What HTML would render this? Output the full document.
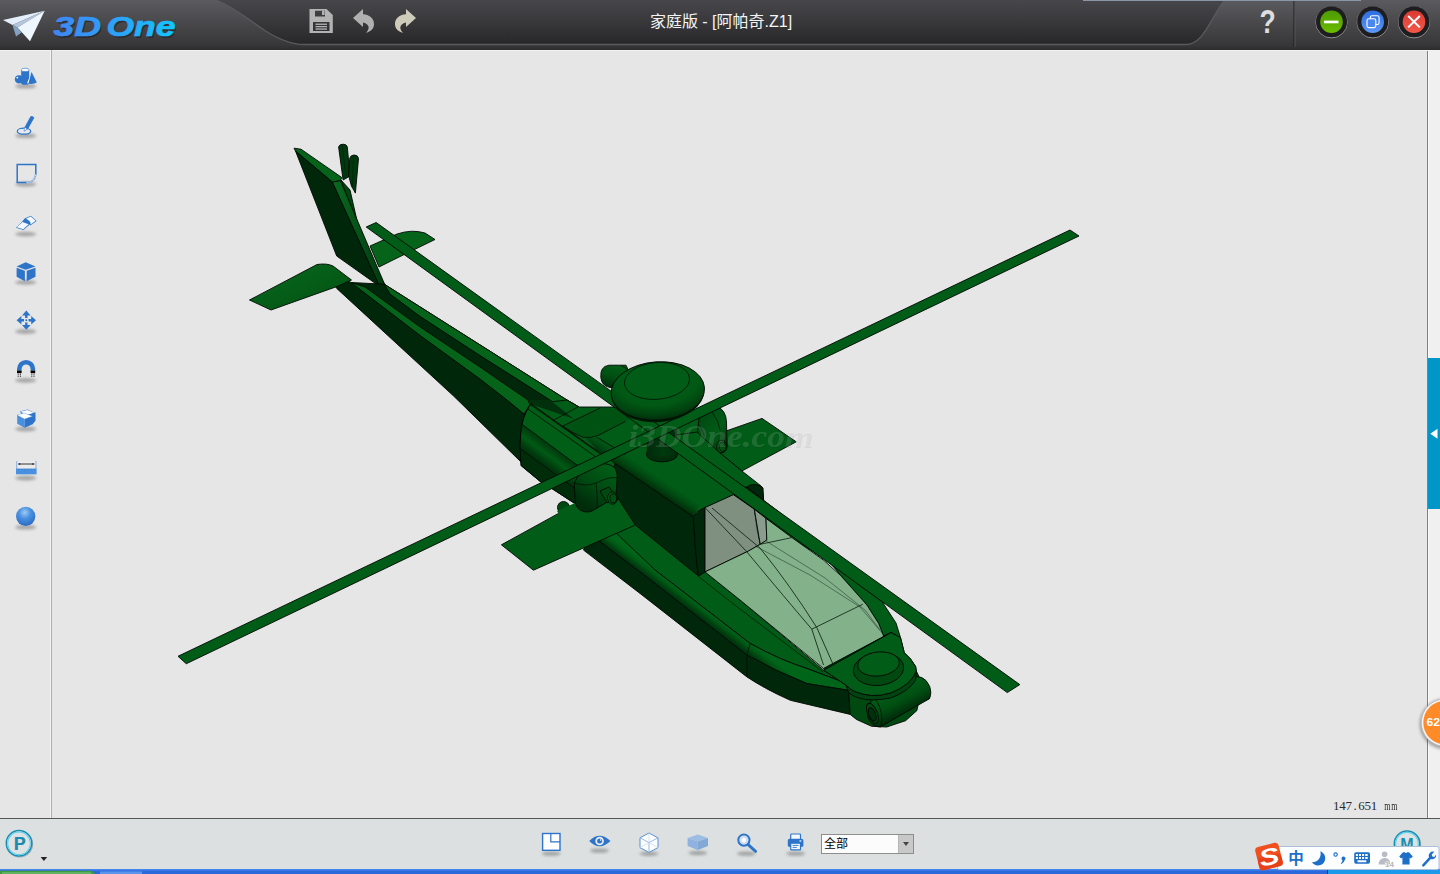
<!DOCTYPE html>
<html lang="zh-CN">
<head>
<meta charset="utf-8">
<title>家庭版 - [阿帕奇.Z1]</title>
<style>
*{box-sizing:border-box;margin:0;padding:0}
html,body{width:1440px;height:874px;overflow:hidden;background:#e6e6e6;font-family:"Liberation Sans","Noto Sans CJK SC",sans-serif}
#app{position:relative;width:1440px;height:874px;overflow:hidden;background:#e6e6e6}
#titlebar{position:absolute;left:0;top:0;width:1440px;height:50px;background:linear-gradient(#4d4d51 0,#434346 40%,#343437 100%)}
#titlebar svg{position:absolute;left:0;top:0}
#title{position:absolute;left:1px;top:12px;width:1440px;text-align:center;color:#f4f4f4;font-size:16px;line-height:20px;letter-spacing:0}
#canvas{position:absolute;left:0;top:50px;width:1440px;height:768px;background:#e6e6e6}
#sideline{position:absolute;left:50px;top:50px;width:2px;height:768px;background:linear-gradient(90deg,#f4f4f4 0 50%,#9db3c4 50% 100%)}
#topstrip{position:absolute;left:0;top:50px;width:1440px;height:1px;background:#f2f2f2}
#rightline{position:absolute;left:1427px;top:51px;width:1px;height:767px;background:#808080}
#rightpane{position:absolute;left:1428px;top:51px;width:12px;height:767px;background:#f0f0f0;border-left:1px solid #fafafa}
#bluetab{position:absolute;left:1428px;top:358px;width:12px;height:151px;background:#0096c8}
#bottombar{position:absolute;left:0;top:818px;width:1440px;height:52px;background:#dce0e0;border-top:1px solid #565656}
#taskbar{position:absolute;left:0;top:869px;width:1440px;height:5px;background:#2b6fe3}
#overlay{position:absolute;left:0;top:0;width:1440px;height:874px}
#combo{position:absolute;left:821px;top:834px;width:93px;height:20px;background:#fcfcfc;border:1px solid #8e8e8e;font-size:12px;line-height:18px;padding-left:2px;color:#000}
#combo i{position:absolute;right:0;top:0;width:15px;height:18px;background:#c8c8c8;border-left:1px solid #b5b5b5}
#combo i:after{content:"";position:absolute;left:4px;top:7px;border:3px solid transparent;border-top:4px solid #444;border-bottom:0}
#dim{position:absolute;left:1333px;top:798px;height:16px;white-space:nowrap;font-family:"Liberation Serif","Noto Serif CJK SC",serif;font-size:13px;line-height:16px;color:#2a2a2a}
#dim span{display:inline-block;width:6.3px;text-align:center}
#dim span.m{transform:scaleX(0.62);transform-origin:50% 50%}
</style>
</head>
<body>
<div id="app">
  <div id="canvas"></div>
  <div id="topstrip"></div>
  <div id="sideline"></div>
  <div id="rightpane"></div>
  <div id="rightline"></div>
  <div id="bluetab"></div>
  <svg id="heli" width="1440" height="874" viewBox="0 0 1440 874" style="position:absolute;left:0;top:0" shape-rendering="geometricPrecision">
<defs>
<linearGradient id="gFinR" x1="0" y1="0" x2="1" y2="0"><stop offset="0" stop-color="#0a6a20"/><stop offset="1" stop-color="#003a0e"/></linearGradient>
<linearGradient id="gStab" x1="0" y1="0" x2="1" y2="1"><stop offset="0" stop-color="#0a6a20"/><stop offset="1" stop-color="#00500f"/></linearGradient>
<radialGradient id="gCap" cx="0.5" cy="0.3" r="0.72"><stop offset="0" stop-color="#006018"/><stop offset="0.62" stop-color="#005814"/><stop offset="0.85" stop-color="#00400f"/><stop offset="1" stop-color="#002608"/></radialGradient>
<linearGradient id="gBox" gradientUnits="userSpaceOnUse" x1="575" y1="425" x2="535" y2="480"><stop offset="0" stop-color="#005c16"/><stop offset="0.35" stop-color="#005213"/><stop offset="0.8" stop-color="#003a0e"/><stop offset="1" stop-color="#002c0a"/></linearGradient>
<linearGradient id="gBody" gradientUnits="userSpaceOnUse" x1="700" y1="604.700" x2="692.500" y2="614.500"><stop offset="0" stop-color="#006419"/><stop offset="0.3" stop-color="#005814"/><stop offset="0.7" stop-color="#003a0e"/><stop offset="1" stop-color="#002a0a"/></linearGradient>
<linearGradient id="gNac" gradientUnits="userSpaceOnUse" x1="610" y1="470" x2="585" y2="505"><stop offset="0" stop-color="#005c16"/><stop offset="0.5" stop-color="#004a12"/><stop offset="1" stop-color="#002c0a"/></linearGradient>
<linearGradient id="gNacR" gradientUnits="userSpaceOnUse" x1="700" y1="420" x2="728" y2="440"><stop offset="0" stop-color="#004a12"/><stop offset="0.6" stop-color="#005c16"/><stop offset="1" stop-color="#003a0e"/></linearGradient>
<linearGradient id="gBarrel" gradientUnits="userSpaceOnUse" x1="896" y1="688" x2="908" y2="712"><stop offset="0" stop-color="#005c16"/><stop offset="0.5" stop-color="#005012"/><stop offset="1" stop-color="#002a0a"/></linearGradient>
<linearGradient id="gNoseF" gradientUnits="userSpaceOnUse" x1="880" y1="680" x2="875" y2="725"><stop offset="0" stop-color="#004a12"/><stop offset="1" stop-color="#00300c"/></linearGradient>
<linearGradient id="gRidge" gradientUnits="userSpaceOnUse" x1="640" y1="464.500" x2="633" y2="475"><stop offset="0" stop-color="#005c16"/><stop offset="0.5" stop-color="#004a12"/><stop offset="1" stop-color="#003009"/></linearGradient>
<linearGradient id="gBump" gradientUnits="userSpaceOnUse" x1="614" y1="366" x2="608" y2="388"><stop offset="0" stop-color="#005c16"/><stop offset="0.45" stop-color="#005012"/><stop offset="1" stop-color="#002a0a"/></linearGradient>
<linearGradient id="gBoxB" gradientUnits="userSpaceOnUse" x1="550" y1="445" x2="537.800" y2="461.500"><stop offset="0" stop-color="#003a0e"/><stop offset="0.12" stop-color="#00400f"/><stop offset="0.45" stop-color="#005a15"/><stop offset="0.8" stop-color="#003c0e"/><stop offset="1" stop-color="#002f0b"/></linearGradient>
<linearGradient id="gValley" gradientUnits="userSpaceOnUse" x1="566" y1="429" x2="572" y2="419"><stop offset="0" stop-color="#006a1a"/><stop offset="0.45" stop-color="#005414"/><stop offset="1" stop-color="#002c0a"/></linearGradient>
<linearGradient id="gMast" gradientUnits="userSpaceOnUse" x1="647" y1="0" x2="678" y2="0"><stop offset="0" stop-color="#00280a"/><stop offset="0.5" stop-color="#003a0e"/><stop offset="1" stop-color="#002e0b"/></linearGradient>
</defs>
<g stroke="#000802" stroke-width="0.9" stroke-linejoin="round">
<!-- right H-stab -->
<path d="M370,246 L397,234 Q412,229 425,233 L435,239.5 L395,259 L379,267 Z" fill="#056419"/>
<!-- tail prongs -->
<path d="M338.600,147 Q339.500,144 343,144.200 Q346.800,144.200 347.300,147 L350,176 L343.100,180 Z" fill="#003a0e"/>
<path d="M349.800,158 Q350.800,155 354.200,155 Q358,155 358.500,158.500 L355.400,193.100 L351.400,186 L348.500,175 Z" fill="#003a0e"/>
<path d="M342.200,145 L346,177 M353.500,156 L352.500,187" fill="none" stroke-width="0.600" stroke-opacity="0.600"/>
<!-- fin back strip -->
<path d="M341,180 L350,190 L358,225 L372,262 L385,285 L380,286 Z" fill="#004611"/>
<!-- fin top -->
<path d="M294,148.200 L301,149.200 L341.800,177.500 L340.400,180.700 L332.500,182.100 L295.500,151 Z" fill="#056419"/>
<!-- fin big dark -->
<path d="M295.500,151 L332.500,182.100 L379.700,286.500 L336.700,256 Z" fill="#00270a"/>
<!-- fin right -->
<path d="M332.500,182.100 L340.400,180.700 L385.200,285.600 L379.700,286.500 Z" fill="url(#gFinR)"/>
<!-- boom -->
<path d="M336.700,288.400 L334,284 L345,279 L351,282.500 L384.300,284.200 L567,400 L579,407 L529,404 L521,440 L521,462 L453.600,396 Z" fill="#00270a"/>
<path d="M384.300,284.200 L567,400 L579,407 L560,408 L550,400 L480,355.500 L420.200,316.500 L390,294 Z" fill="#056419"/>
<path d="M365,287 L420.200,327 L480,367 L528,400 L530,405 L524,414 L507,400 L480,379 L420.200,335.500 L351,282.500 Z" fill="#056419"/>
<!-- left H-stab -->
<path d="M249.500,300 L317,264.500 Q327,263 333,266 L351.500,280 L337,286.500 L271,310 Z" fill="url(#gStab)"/>
<!-- right wing -->
<path d="M720,453 L726,431 L762,418.400 L796.200,441.800 L741.900,471 Z" fill="#005c16"/>
<!-- right nacelle -->
<path d="M695,430 L699,413 Q706,403 717,406.500 Q726,410 726.500,422 L727,446 Q723,454 716,451 L695,438 Z" fill="url(#gNacR)"/>
<path d="M695.600,421.100 Q702,427 704.400,436 M712.200,412.200 Q719,421 720,430" fill="none" stroke-width="0.700"/>
<ellipse cx="721.800" cy="446.500" rx="5.200" ry="6.300" fill="#005c16"/>
<ellipse cx="722.600" cy="446.800" rx="3.600" ry="4.600" fill="#005012"/>
<!-- top junction region -->
<path d="M530.900,404.200 L567,400 L579,407 L614,407 L700,410 L697,436 L640,470 L615,463.500 Z" fill="#005c16"/>
<path d="M528,400 L550,400 L573.500,418.800 L530.900,404.300 Z" fill="#00300c" stroke="none"/>

<!-- deck -->
<path d="M615,463.500 L640,440 L697,432 L720,453 L741.900,471 L756.900,482.700 L762,486.900 L763.600,500.200 L746,487 L733.400,494.700 L705,507.600 L696.700,511.800 L693.700,517 Z" fill="#005c16"/>
<path d="M746.900,486.900 Q752,483 760,485.500 L763,488 L763.600,500.200 Z" fill="#00270a"/>
<!-- big box -->
<path d="M531.100,403.900 L593.500,448.500 L617,465 L622,500 L575,503.600 L551.800,488.500 L541.100,482.200 L521.100,465.600 L520,445.600 Q520.500,432 522.200,423.300 Q525,411 531.100,403.900 Z" fill="#005e17"/>
<path d="M522.200,424.400 L577.800,465.600 L600,482 L585,496 L555.600,474.400 L520.600,448.900 Q520.700,434 522.200,424.400 Z" fill="url(#gBoxB)" stroke="none"/>
<path d="M520.600,448.900 L555.600,474.400 L585,496 L575,503.600 L551.800,488.500 L541.100,482.200 L521.100,465.600 L520,445.600 Z" fill="#002c0a" stroke="none"/>
<path d="M527.800,408.900 L595.600,456.700 M522.200,424.400 L577.800,465.600 L600,482 M520.600,448.900 L555.600,474.400 L585,496" fill="none" stroke-width="0.800"/>
<path d="M531.100,403.900 Q525,411 522.200,423.300 Q520.500,432 520,445.600 L521.100,465.600 L541.100,482.200 L551.800,488.500 L575,503.600" fill="none" stroke-width="0.900"/>
<!-- ridge -->
<path d="M585.600,437.900 L596.800,437.200 L614.200,447.600 L624.400,454.400 L700,503 L693.700,517 L615,463.500 L600.200,453.900 Z" fill="url(#gRidge)" stroke="none"/>
<!-- saddle -->
<path d="M562.600,426 Q573,433.500 582.800,437.200 Q590,438.500 598,435.500 L625.300,421.500 L640,410 L600.300,407.900 Z" fill="#005213" stroke="none"/>
<path d="M554.300,419.800 L577.700,407.100 M562.600,426 L600.300,407.900 M562.600,426 Q573,433.500 582.800,437.200 Q590,438.500 598,435.500 L625.300,421.500 M596.800,437.200 L614.200,447.600 M529.100,403.700 L600.200,453.900" fill="none" stroke-width="0.800"/>
<!-- dark side -->
<path d="M615,463.500 L693.700,517 L695,545 L698.400,576 L635.300,525 L618.600,506 L612,480 Z" fill="#00270a"/>
<!-- lower body -->
<path d="M603,528 L618.600,506 L635.300,525 L698.400,576 L705,571.900 L740,600 L823.700,670.200 L847,683.600 L807,668.500 Q780,660 750.200,643.500 L655,570 L612,536.800 Z" fill="#005c16"/>
<path d="M614,531 L655,570 L750.200,643.500 Q780,660 807,668.500 L847,683.600 L848.600,690.300 L807,683.600 Q775,671 746.900,655.200 L640,572 L600,541.800 L602,536 Z" fill="url(#gBody)"/>
<path d="M602,536 L600,541.800 L640,572 L746.900,655.200 Q775,671 807,683.600 L848.600,690.300 L850.200,714.400 L790.300,700.300 Q765,689 746.900,676.900 L640,593.400 L583.500,550.100 L586,543 Z" fill="#00270a"/>
<path d="M750.200,643.500 L746.900,655.200 L746.900,676.900" fill="none" stroke-width="0.7"/>
<path d="M698.400,576.500 L740,609 L823,672" fill="none" stroke-width="0.6"/>
<!-- left wing -->
<path d="M501.400,544.800 L558.500,513.400 L573.500,505 L603.600,503 L618.600,499 L635.300,525 L533.400,570.200 Z" fill="#005c16"/>
<circle cx="563.500" cy="507.500" r="6" fill="#004a12"/>
<path d="M557,511 L575,503 L575,515 L560,516 Z" fill="#005c16" stroke="none"/>
<!-- left nacelle -->
<path d="M574.300,483 Q578,472 592,466 Q606,461 614,467 Q618,472 617,480 L616,497 L597,508 Q588,515 580,510 Q575,507 575,498 Z" fill="url(#gNac)"/>
<path d="M574.300,483 Q586,487 596,483 Q610,476 617,478 M596,483 Q598,497 597,508" fill="none" stroke-width="0.7"/>
<path d="M600,491 L609,487 L616,497 L607,503 Z" fill="#004a12"/>
<ellipse cx="612.500" cy="498" rx="5" ry="6.200" fill="#005c16"/>
<ellipse cx="613.300" cy="498.300" rx="3.400" ry="4.500" fill="#005012"/>
<!-- right rim (cockpit) -->
<path d="M733.400,494.700 L746,487 L763.600,500.200 L797,526 L863.600,588 L882,601.500 L896,623 L900.500,637.600 L891.100,632.600 L883.600,636 L878.600,623.400 L866.900,605 L853.600,590 L827.500,560 L790,537.500 L766,518.400 L754.300,509.200 Z" fill="#005c16"/>
<!-- cockpit frame -->
<path d="M693.400,520.100 Q694,512 705,507.600 L705,571.900 L698.400,576 L696.700,563.500 Z" fill="#00270a"/>
<!-- rear glass -->
<path d="M705,507.600 L733.400,494.700 L754.300,509.200 L760.200,544.300 L748.500,551 L705,571.900 Z" fill="#7f9080"/>
<path d="M754.300,509.200 L766,518.400 L766.800,540.100 L760.200,544.300 Z" fill="#8a9c8b"/>
<!-- green glass -->
<path d="M705,571.900 L748.500,551 L760.200,544.300 L766.800,540.100 L766,518.400 L791.900,537.600 L823.600,560.200 L840.300,575.200 L853.600,590 L866.900,605 L878.600,623.400 L883.600,636 L891.100,632.600 L823.500,668.500 L740,600 Z" fill="#82b18a"/>
<g fill="none" stroke="#0a1a0d" stroke-width="0.8">
<path d="M705,507.600 L747,552 Q770,580 811.800,629.200 L823.500,665"/>
<path d="M712,508 L760,548 Q790,585 816.800,627.600 L832.700,663.500"/>
<path d="M760.200,544.300 L791.900,537.600"/>
<path d="M811.800,629.200 L862.800,604.200"/>
<path d="M755,546 L810,575 L860,607 L883,634" stroke-opacity="0.55"/>
<path d="M766,541 L825,578 L865,610 L880,630" stroke-opacity="0.55"/>
<path d="M754.300,509.200 L757,530 L760.200,544.300" stroke-opacity="0.55"/>
</g>
<path d="M823.500,668.500 L891.100,632.600 L893,635.500 L826,671 Z" fill="#003a0e" stroke-width="0.5"/>
<!-- nose -->
<path d="M848.900,693 L846.400,685.400 L823.700,670.200 L891.100,632.600 L900.500,637.600 L904.300,652.700 L910.600,659 L915.600,666.500 L916.300,671 L929.500,698.600 L918.200,704.300 L916.900,710.600 L905.600,720.700 L886.700,727 L871.600,726.300 L856.400,719.400 L850.200,714.400 Z" fill="#004a12"/>
<!-- gun barrel -->
<path d="M871.600,700.500 L916.900,676.600 Q922,676.500 926,680.500 Q931,686.500 930.800,692 Q930.800,696 929.500,698.600 L880.400,727 Q872,727 868,718 Q866,708 871.600,700.500 Z" fill="url(#gBarrel)"/>
<path d="M876,700 Q884,712 881,726" fill="none" stroke-width="0.700"/>
<ellipse cx="872.400" cy="713.300" rx="4.800" ry="10.600" fill="#004a12" transform="rotate(-22 872.400 713.300)"/>
<ellipse cx="872.200" cy="714.400" rx="3.300" ry="7" fill="#00300c" transform="rotate(-22 872.200 714.400)"/>
<!-- lip band -->
<path d="M846.400,685.400 Q849.500,689 855.200,691.700 Q862,694.500 871.600,695.500 Q881,695.800 890.500,693 Q900,689.500 908.100,682.900 Q914,677 916.300,671 L915.600,680.400 Q912,685.500 905.600,690.500 Q899,695 890.500,698 Q882,699.800 872.800,699.900 Q866,700 859,698 Q853,696 848.900,693 Z" fill="#004511"/>
<!-- platform -->
<path d="M823.700,670.200 L891.100,632.600 L900.500,637.600 L904.300,652.700 L910.600,659 L915.600,666.500 L916.300,671 Q914,677 908.100,682.900 Q900,689.500 890.500,693 Q881,695.800 871.600,695.500 Q862,694.500 855.200,691.700 Q849.500,689 846.400,685.400 Z" fill="#005c16"/>
<ellipse cx="878.500" cy="669" rx="25.200" ry="16.400" fill="#004a12" transform="rotate(-6 878.500 669)"/>
<ellipse cx="878.500" cy="664" rx="20.800" ry="12" fill="#005c16" transform="rotate(-6 878.500 664)"/>
<!-- mast -->
<ellipse cx="662" cy="454.300" rx="15.600" ry="7.500" fill="#002e0b"/>
<path d="M647,426 L677,426 L677.600,453 Q662,460 646.700,453 Z" fill="url(#gMast)" stroke="none"/>
<!-- blades -->
<path d="M366.200,227 L376.200,222.500 L1019.800,684.600 L1007.300,692.600 Z" fill="#005c16"/>
<path d="M178,656.250 L186.250,663.750 L1079,236 L1070,230 Z" fill="#005c16"/>
<!-- bump -->
<path d="M600.800,377 Q600,366.500 609,365.200 L626,365.200 L632,378 L624,388 L610,387.500 Q601.500,386 600.800,377 Z" fill="url(#gBump)"/>
<path d="M621,365.500 L627,369" fill="none" stroke-width="0.700"/>
<ellipse cx="657.800" cy="393.200" rx="46.500" ry="29" fill="#001c06" stroke="none" transform="rotate(-4 657.800 393.200)"/>
<!-- cap -->
<ellipse cx="657.800" cy="391" rx="46.800" ry="29.200" fill="url(#gCap)" transform="rotate(-4 657.800 391)"/>
<ellipse cx="657" cy="380.900" rx="32.600" ry="18.400" fill="#005c16" transform="rotate(-5 657 380.900)" stroke-width="0.7"/>
</g>
</svg>

  <div id="titlebar"></div>
  <div id="bottombar"></div>
  <div id="taskbar"></div>
  <div id="combo">全部<i></i></div>
  <div id="dim"><span>1</span><span>4</span><span>7</span><span>.</span><span>6</span><span>5</span><span>1</span><span> </span><span class="m">m</span><span class="m">m</span></div>
  <svg id="overlay" width="1440" height="874" viewBox="0 0 1440 874">
<defs>
<linearGradient id="tbOuter" x1="0" y1="0" x2="0" y2="1"><stop offset="0" stop-color="#5b5b5f"/><stop offset="0.5" stop-color="#47474a"/><stop offset="0.9" stop-color="#37373a"/><stop offset="1" stop-color="#2c2c2e"/></linearGradient>
<linearGradient id="tbInner" x1="0" y1="0" x2="0" y2="1"><stop offset="0" stop-color="#47474b"/><stop offset="0.5" stop-color="#38383b"/><stop offset="1" stop-color="#27272a"/></linearGradient>
<linearGradient id="logoG" gradientUnits="userSpaceOnUse" x1="53" y1="0" x2="176" y2="0"><stop offset="0" stop-color="#3f86f2"/><stop offset="0.45" stop-color="#2f9ef8"/><stop offset="1" stop-color="#12c6ff"/></linearGradient>
<linearGradient id="gGreen" x1="0" y1="0" x2="0" y2="1"><stop offset="0" stop-color="#4c9a00"/><stop offset="1" stop-color="#6cbc00"/></linearGradient>
<linearGradient id="gBlue" x1="0" y1="0" x2="0" y2="1"><stop offset="0" stop-color="#2c6ce0"/><stop offset="1" stop-color="#5c98f6"/></linearGradient>
<linearGradient id="gRed" x1="0" y1="0" x2="0" y2="1"><stop offset="0" stop-color="#d83a32"/><stop offset="1" stop-color="#f4584a"/></linearGradient>
<filter id="sh" x="-50%" y="-50%" width="200%" height="200%"><feGaussianBlur stdDeviation="1.6"/></filter>
<filter id="sh2" x="-50%" y="-50%" width="200%" height="200%"><feGaussianBlur stdDeviation="1.2"/></filter>
<radialGradient id="gBall" cx="0.45" cy="0.3" r="0.7"><stop offset="0" stop-color="#9ccaf4"/><stop offset="0.45" stop-color="#4a90e0"/><stop offset="1" stop-color="#2a6cc4"/></radialGradient>
</defs>
<!-- TITLE BAR -->
<rect x="0" y="0" width="1440" height="50" fill="url(#tbOuter)"/>
<path d="M215.500,0 C232,6 248,19 265.500,31 C280,40 292,44.500 304,44.500 L1186,44.500 C1198,44.500 1205,32 1212,20 C1217,11 1221,4 1225,0 Z" fill="url(#tbInner)"/>
<path d="M215.500,0 C232,6 248,19 265.500,31 C280,40 292,44.500 304,44.500 L1186,44.500 C1198,44.500 1205,32 1212,20 C1217,11 1221,4 1225,0" fill="none" stroke="#5a5a5e" stroke-width="1.300"/>
<rect x="1083" y="0" width="278" height="1" fill="#8797a6"/>
<rect x="1293.500" y="1" width="1" height="46" fill="#1d1d1f"/>
<rect x="1294.500" y="1" width="1" height="46" fill="#555558"/>
<!-- logo plane -->
<g>
<path d="M3,20 L44.700,10.800 L12.500,25 Z" fill="#e4eefa"/>
<path d="M12.500,25 L44.700,10.800 L17.500,27.500 Z" fill="#b4c6dc"/>
<path d="M12.500,25 L17.500,27.500 L21.500,32.500 L16,36.500 Z" fill="#86a0c2"/>
<path d="M17.500,27.500 L44.700,10.800 L30,41.300 Z" fill="#eef6ff"/>
</g>
<g font-family="'Liberation Sans',sans-serif" font-weight="bold" font-style="italic" font-size="28.500">
<text x="55" y="38" fill="#1c1c1e" opacity="0.55" textLength="47.5" lengthAdjust="spacingAndGlyphs">3D</text>
<text x="108" y="38" fill="#1c1c1e" opacity="0.55" textLength="69" lengthAdjust="spacingAndGlyphs">One</text>
<text x="53.500" y="36" fill="url(#logoG)" stroke="url(#logoG)" stroke-width="0.700" textLength="47.5" lengthAdjust="spacingAndGlyphs">3D</text>
<text x="106.500" y="36" fill="url(#logoG)" stroke="url(#logoG)" stroke-width="0.700" textLength="69" lengthAdjust="spacingAndGlyphs">One</text>
</g>
<!-- save -->
<g fill="#b3b3b3">
<path d="M309.500,9 L326.500,9 L332.800,15 L332.800,33 L309.500,33 Z M315,10.800 L315,16.500 L325,16.500 L325,10.800 Z M313,22 L313,31 L329.500,31 L329.500,22 Z"  fill-rule="evenodd"/>
<rect x="322" y="10.800" width="2.600" height="4.200" fill="#b3b3b3"/>
<rect x="315.500" y="23.600" width="11.500" height="1.300"/><rect x="315.500" y="26" width="11.500" height="1.300"/><rect x="315.500" y="28.400" width="11.500" height="1.300"/>
</g>
<!-- undo / redo -->
<path d="M353,18 L363,9 L363,14.200 C370,14.500 374.500,19 374,25 C373.600,28.500 371,31.500 366,33 C369.500,29.500 370.500,24.500 363,22.600 L363,27 Z" fill="#b0b0b0"/>
<path d="M416,18 L406,9 L406,14.200 C399,14.500 394.500,19 395,25 C395.400,28.500 398,31.500 403,33 C399.500,29.500 398.500,24.500 406,22.600 L406,27 Z" fill="#cfcbbb"/>
<!-- help -->
<text x="1267.500" y="32.600" text-anchor="middle" font-family="'Liberation Sans',sans-serif" font-weight="bold" font-size="34" fill="#dedede" transform="translate(1267.500 0) scale(0.780 1) translate(-1267.500 0)">?</text>
<!-- window buttons -->
<g>
<circle cx="1331.500" cy="22.300" r="15.600" fill="none" stroke="#9a9a9d" stroke-width="1"/>
<circle cx="1331.500" cy="21.700" r="15.500" fill="#1e1e20"/>
<circle cx="1331.500" cy="21.700" r="11.300" fill="url(#gGreen)"/>
<rect x="1324" y="20.600" width="14.500" height="2.700" fill="#fff"/>
<circle cx="1372.700" cy="22.300" r="15.600" fill="none" stroke="#9a9a9d" stroke-width="1"/>
<circle cx="1372.700" cy="21.700" r="15.500" fill="#1e1e20"/>
<circle cx="1372.700" cy="21.700" r="11.300" fill="url(#gBlue)"/>
<rect x="1370.300" y="15.700" width="8.800" height="8.800" rx="1.800" fill="none" stroke="#fff" stroke-width="1.100"/>
<rect x="1367" y="18.800" width="8.800" height="8.800" rx="1.800" fill="#4a88f0" stroke="#fff" stroke-width="1.100"/>
<circle cx="1414" cy="22.300" r="15.600" fill="none" stroke="#9a9a9d" stroke-width="1"/>
<circle cx="1414" cy="21.700" r="15.500" fill="#1e1e20"/>
<circle cx="1414" cy="21.700" r="11.300" fill="url(#gRed)"/>
<path d="M1408.200,16 L1419.800,27.400 M1419.800,16 L1408.200,27.400" stroke="#fff" stroke-width="2" fill="none"/>
</g>
<!-- SIDEBAR ICONS -->
<ellipse cx="25.7" cy="86.2" rx="10.5" ry="2.4" fill="#505050" opacity="0.42" filter="url(#sh)"/>
<circle cx="19" cy="79.300" r="4.100" fill="#2e74c8"/>
<circle cx="17.300" cy="77.600" r="0.900" fill="#fff"/>
<path d="M21.200,70 L21.200,83.200 A4,1.600 0 0 0 29.200,83.200 L29.200,70 Z" fill="#2e74c8"/>
<ellipse cx="25.200" cy="69.900" rx="4" ry="1.700" fill="#fff" stroke="#2e74c8" stroke-width="0.600"/>
<path d="M31.600,72 L36.800,82.600 Q32,85 27.300,83.200 Z" fill="#2e74c8"/>
<path d="M31.300,72.600 L27.100,83.200 L28.400,83.500 Z" fill="#fff"/>
<ellipse cx="25.7" cy="135.7" rx="10.5" ry="2.4" fill="#505050" opacity="0.42" filter="url(#sh)"/>
<ellipse cx="24" cy="131.200" rx="6.700" ry="3" fill="#e6e9ee" stroke="#2e74c8" stroke-width="1.300"/>
<path d="M24,131.300 L24.600,127.200 L30.400,116.500 Q32.500,115.300 34.300,117.800 L28.200,128.800 Z" fill="#2e74c8"/>
<path d="M24,131.300 L24.600,127.200 L27.300,129 Z" fill="#fff" stroke="#2e74c8" stroke-width="0.500"/>
<ellipse cx="25.7" cy="184.3" rx="10.5" ry="2.4" fill="#505050" opacity="0.42" filter="url(#sh)"/>
<path d="M17.200,164.600 L35.800,164.600 L35.800,174 Q35,182.600 26.500,182.600 L17.200,182.600 Z" fill="none" stroke="#2e74c8" stroke-width="1.500"/>
<path d="M35.800,174 Q35,182.600 26.500,182.600" fill="none" stroke="#c8d4e6" stroke-width="1.600"/>
<path d="M35.800,174 Q35,182.600 26.500,182.600" fill="none" stroke="#2e74c8" stroke-width="0.600" stroke-dasharray="1 1"/>
<ellipse cx="25.7" cy="234.1" rx="10.5" ry="2.4" fill="#505050" opacity="0.42" filter="url(#sh)"/>
<path d="M16,227.800 L22.300,221.500 L24.600,218.600 L30.900,215.800 L36.600,220.900 L30.300,225.500 L29.700,224.400 L23.500,230.100 Z" fill="#2e74c8"/>
<path d="M16.800,227.300 L22.500,222 L28.600,224.300 L23.300,229.200 Z" fill="#f4f8ff"/>
<path d="M26,218.800 L30.800,216.600 L35.600,220.800 L30.600,224.400 Q31,221 26,218.800 Z" fill="#f4f8ff"/>
<ellipse cx="25.7" cy="282.4" rx="10.5" ry="2.4" fill="#505050" opacity="0.42" filter="url(#sh)"/>
<path d="M25.700,262.200 L35.500,266.400 L25.700,269.700 L16.600,266.400 Z" fill="#2e74c8"/>
<path d="M16.600,267.700 L24.900,270.800 L24.900,281.200 L16.600,276.800 Z" fill="#2e74c8"/>
<path d="M26.700,270.800 L35.500,267.700 L35.500,276.800 L26.700,281.200 Z" fill="#2e74c8"/>
<ellipse cx="25.7" cy="331.5" rx="10.5" ry="2.4" fill="#505050" opacity="0.42" filter="url(#sh)"/>
<g fill="#2e74c8">
<path d="M26.300,310.600 L30.600,315.400 L27.500,315.400 L27.500,318 L25.100,318 L25.100,315.400 L22,315.400 Z"/>
<path d="M26.300,329.800 L30.600,325 L27.500,325 L27.500,322.400 L25.100,322.400 L25.100,325 L22,325 Z"/>
<path d="M16.600,320.200 L21.400,315.900 L21.400,319 L24,319 L24,321.400 L21.400,321.400 L21.400,324.500 Z"/>
<path d="M36,320.200 L31.200,315.900 L31.200,319 L28.600,319 L28.600,321.400 L31.200,321.400 L31.200,324.500 Z"/>
<rect x="25.400" y="319.300" width="1.800" height="1.800"/>
</g>
<ellipse cx="25.7" cy="380.4" rx="10.5" ry="2.4" fill="#505050" opacity="0.42" filter="url(#sh)"/>
<path d="M17,370.500 L17,369 A9.100,9.100 0 0 1 35.200,369 L35.200,370.500 L30.600,370.500 L30.600,369 A4.500,4.500 0 0 0 21.600,369 L21.600,370.500 Z" fill="#2e74c8"/>
<rect x="17" y="370.500" width="4.600" height="2.600" fill="#000"/><rect x="30.600" y="370.500" width="4.600" height="2.600" fill="#000"/>
<path d="M18.200,373.600 V377.400 M20.400,373.600 V377.400 M31.800,373.600 V377.400 M34,373.600 V377.400" stroke="#222" stroke-width="1" stroke-dasharray="1.200 0.800" fill="none"/>
<ellipse cx="25.7" cy="429" rx="10.5" ry="2.4" fill="#505050" opacity="0.42" filter="url(#sh)"/>
<path d="M20,411.600 L27.500,409.600 L34.300,412.800 L35.500,412.200 L35.500,420.800 L32.600,424.200 L24.600,419 Z" fill="#2e74c8"/>
<path d="M20.400,411.700 L27.500,410 L33.800,412.800 L27,415 Z" fill="#fff"/>
<path d="M17.200,415.100 L24.600,419.100 L24.600,427.700 L17.200,423.700 Z" fill="#4a90e0"/>
<path d="M24.600,419.100 L32.600,416.200 L32.600,424.200 L24.600,427.700 Z" fill="#2e74c8"/>
<path d="M17.200,415.100 L24,412.900 L32.600,416.200 L24.600,419.100 Z" fill="#fff" stroke="#4a90e0" stroke-width="0.400"/>
<ellipse cx="25.7" cy="478" rx="10.5" ry="2.4" fill="#505050" opacity="0.42" filter="url(#sh)"/>
<rect x="16" y="461.200" width="20.600" height="7.600" fill="#ebebeb"/>
<rect x="16" y="461" width="1.300" height="8" fill="#9db8dc"/><rect x="35.300" y="461" width="1.300" height="8" fill="#9db8dc"/>
<rect x="16" y="468.600" width="20.600" height="5.700" fill="#4a90e0"/>
<path d="M18.300,464 H34.300" stroke="#222" stroke-width="0.900"/><path d="M18,464 L20.200,462.900 L20.200,465.100 Z M34.600,464 L32.400,462.900 L32.400,465.100 Z" fill="#222"/>
<path d="M19,468.800 V470 M22,468.800 V470 M25,468.800 V470.500 M28,468.800 V470 M31,468.800 V470 M34,468.800 V470" stroke="#2e74c8" stroke-width="0.600"/>
<ellipse cx="25.7" cy="527.2" rx="10.5" ry="2.4" fill="#505050" opacity="0.42" filter="url(#sh)"/>
<circle cx="25.700" cy="516.400" r="9.600" fill="url(#gBall)"/>
<!-- BOTTOM ICONS -->
<ellipse cx="551.3" cy="853.6" rx="9.5" ry="2.2" fill="#505050" opacity="0.42" filter="url(#sh)"/>
<rect x="542.600" y="833.500" width="17.400" height="16.800" fill="#fff" stroke="#2e74c8" stroke-width="1.400"/>
<path d="M550.800,833.500 V841.800 H560" fill="none" stroke="#2e74c8" stroke-width="1.200"/>
<ellipse cx="599.4" cy="850.6" rx="9.5" ry="2.2" fill="#505050" opacity="0.42" filter="url(#sh)"/>
<path d="M589.200,841.100 Q599.400,830.600 610.500,841.100 Q599.400,851.600 589.200,841.100 Z" fill="#2e74c8"/>
<circle cx="599.600" cy="841" r="4.300" fill="#e8eef8"/><circle cx="599.600" cy="841" r="2.500" fill="#2e74c8"/><circle cx="600.600" cy="840" r="0.800" fill="#fff"/>
<ellipse cx="649" cy="853.8" rx="9.5" ry="2.2" fill="#505050" opacity="0.42" filter="url(#sh)"/>
<path d="M649,833 L658,837.800 L658,847.600 L649,852.400 L640,847.600 L640,837.800 Z" fill="#fbfdff" stroke="#5a8fd4" stroke-width="1"/>
<path d="M649,842.600 L640,837.800 M649,842.600 L658,837.800 M649,842.600 V852.400" stroke="#8fb2e0" stroke-width="0.900" fill="none"/>
<path d="M649,842.600 L649,833 M649,842.600 L640,847.600 M649,842.600 L658,847.600" stroke="#c4d6ee" stroke-width="0.700" fill="none"/>
<ellipse cx="697.8" cy="853" rx="9.5" ry="2.2" fill="#505050" opacity="0.42" filter="url(#sh)"/>
<path d="M697.800,834.400 L708,838 L697.800,841.600 L687.600,838 Z" fill="#9dbde4"/>
<path d="M687.600,838 L697.800,841.600 L697.800,850 L687.600,846 Z" fill="#8fb2de"/>
<path d="M697.800,841.600 L708,838 L708,846 L697.800,850 Z" fill="#82a8d6"/>
<ellipse cx="746.4" cy="853.6" rx="9.5" ry="2.2" fill="#505050" opacity="0.42" filter="url(#sh)"/>
<circle cx="743.900" cy="840.100" r="5.600" fill="#dfe8f4" stroke="#2e74c8" stroke-width="2"/>
<path d="M743.900,836.800 L746.800,838.400 L746.800,841.800 L743.900,843.400 L741,841.800 L741,838.400 Z" fill="#f8fbff" stroke="#8fb2e0" stroke-width="0.500"/>
<path d="M748.200,844.600 L755.600,851.400" stroke="#2e74c8" stroke-width="2.800" stroke-linecap="round"/>
<ellipse cx="795.7" cy="853.6" rx="9.5" ry="2.2" fill="#505050" opacity="0.42" filter="url(#sh)"/>
<rect x="790.700" y="834" width="9.800" height="6" rx="0.800" fill="#f4f8ff" stroke="#2e74c8" stroke-width="1.200"/>
<rect x="787.800" y="838.800" width="15.600" height="8.200" rx="1.800" fill="#2e74c8"/>
<rect x="790.700" y="843.200" width="9.800" height="6.600" rx="0.600" fill="#f4f8ff" stroke="#2e74c8" stroke-width="1.200"/>
<path d="M792.600,845.400 H798.600 M792.600,847.400 H796.800" stroke="#2e74c8" stroke-width="0.900"/>
<rect x="799.500" y="840.400" width="1.800" height="1.200" fill="#fff"/>
<!-- P / M icons -->
<g font-family="'Liberation Sans',sans-serif" font-weight="bold" font-size="17.500" text-anchor="middle">
<circle cx="19.600" cy="844" r="13" fill="none" stroke="#7a8a90" stroke-width="1.200" opacity="0.6"/>
<circle cx="19" cy="843.300" r="12.700" fill="#dde3e4" stroke="#1a8fb4" stroke-width="1.500"/>
<circle cx="19" cy="843.300" r="11.300" fill="none" stroke="#5cd0ec" stroke-width="1.100"/>
<text x="20.300" y="850.400" fill="#5a6a70" opacity="0.5">P</text>
<text x="19.600" y="849.700" fill="#1a8db2">P</text>
<circle cx="1407.600" cy="844.400" r="13" fill="none" stroke="#7a8a90" stroke-width="1.200" opacity="0.6"/>
<circle cx="1407" cy="843.700" r="12.700" fill="#dde3e4" stroke="#1a8fb4" stroke-width="1.500"/>
<circle cx="1407" cy="843.700" r="11.300" fill="none" stroke="#5cd0ec" stroke-width="1.100"/>
<text x="1407" y="850" fill="#1a8db2" font-size="16">M</text>
</g>
<path d="M40.600,857 L47.200,857 L43.900,861 Z" fill="#222"/>
<!-- taskbar -->
<rect x="0" y="869.500" width="1440" height="4.500" fill="#2a68dc"/>
<rect x="0" y="869" width="1440" height="1.500" fill="#4585ee"/>
<path d="M0,870.800 L91,870.800 Q94,871.500 95,874 L0,874 Z" fill="#3f9a3f"/>
<path d="M2,872 L90,872 L92,874 L2,874 Z" fill="#62b062"/>
<rect x="100" y="871.500" width="42" height="2.500" fill="#5c94ec"/>
<rect x="1328" y="869.500" width="112" height="4.500" fill="#1b9aec"/>
<rect x="1327" y="870" width="1" height="4" fill="#123c8c"/>
<!-- IME bar -->
<rect x="1277.500" y="846.500" width="161.500" height="23" rx="2" fill="#fdfeff" stroke="#a9bfdc" stroke-width="1"/>
<g transform="rotate(-14 1269 856.500)"><rect x="1257" y="844.500" width="24" height="24" rx="3.500" fill="#f0501e"/><rect x="1257" y="856" width="24" height="12.500" rx="3.500" fill="#e8401a"/></g>
<text x="1269" y="866" text-anchor="middle" font-family="'Liberation Sans',sans-serif" font-weight="bold" font-style="italic" font-size="26" fill="#fff" transform="rotate(-12 1269 857) translate(1269 0) scale(1.150 0.900) translate(-1269 95)">S</text>
<g fill="#1e6fc8">
<text x="1296" y="864.300" text-anchor="middle" font-family="'Liberation Sans','Noto Sans CJK SC',sans-serif" font-weight="bold" font-size="15.500">中</text>
<path d="M1320.300,851.300 A7.300,7.300 0 1 1 1311.900,862.300 A8.500,8.500 0 0 0 1320.300,851.300 Z"/>
<circle cx="1335.600" cy="854.600" r="1.700" fill="none" stroke="#1e6fc8" stroke-width="1.100"/>
<path d="M1341.500,858.500 a2,2 0 1 1 3.200,1.600 q-0.300,2.500 -3.200,4 l-0.700,-0.900 q1.600,-1.100 1.700,-2.800 a2,2 0 0 1 -1,-1.900 Z"/>
<path d="M1356,852.200 h12.200 a1.800,1.800 0 0 1 1.800,1.800 v8 a1.800,1.800 0 0 1 -1.800,1.800 h-12.200 a1.800,1.800 0 0 1 -1.800,-1.800 v-8 a1.800,1.800 0 0 1 1.800,-1.800 Z M1355.900,853.900 v2 h2 v-2 Z M1359,853.900 v2 h2 v-2 Z M1362.100,853.900 v2 h2 v-2 Z M1365.200,853.900 v2 h2.500 v-2 Z M1355.900,857 v2 h2 v-2 Z M1359,857 v2 h2 v-2 Z M1362.100,857 v2 h2 v-2 Z M1365.200,857 v2 h2.500 v-2 Z M1357.500,860.300 v1.900 h8.800 v-1.900 Z" fill-rule="evenodd"/>
<path d="M1399.200,856.500 L1403,852.200 L1404.700,852.200 Q1406,853.800 1407.300,852.200 L1409,852.200 L1412.800,856.500 L1410.800,858.500 L1409.600,857.400 L1409.600,864.500 L1402.400,864.500 L1402.400,857.400 L1401.200,858.500 Z"/>
<path d="M1422.200,864.700 L1429,857.200 A4.200,4.200 0 0 1 1434.300,851.800 L1431.700,854.500 L1432.400,856.400 L1434.300,857 L1436.200,854.400 A4.200,4.200 0 0 1 1430.800,859 L1424.200,866.300 A1.300,1.300 0 0 1 1422.200,864.700 Z"/>
</g>
<g fill="#b9bcc2"><circle cx="1384.600" cy="854.300" r="2.800"/><path d="M1378.600,864.500 Q1379,858 1384.600,858 Q1389,858 1390,862 L1390,864.500 Z"/><text x="1389.500" y="866.500" text-anchor="middle" font-family="'Liberation Sans',sans-serif" font-weight="bold" font-size="8" fill="#b2b6bc" stroke="#fff" stroke-width="0.900" paint-order="stroke">14</text></g>
<!-- right blue tab arrow -->
<path d="M1430.300,433.800 L1437.500,428.800 L1437.500,438.800 Z" fill="#fff"/>
<!-- orange badge -->
<circle cx="1445" cy="724" r="25.500" fill="#505050" opacity="0.450" filter="url(#sh)"/>
<circle cx="1445" cy="722.600" r="23.700" fill="#f4f4f4" stroke="#b8b8b8" stroke-width="0.800"/>
<circle cx="1445" cy="722.600" r="21.700" fill="#ff8a28"/>
<text x="1426.600" y="726" font-family="'Liberation Sans',sans-serif" font-weight="bold" font-size="10.500" fill="#fff" transform="translate(1426.600 0) scale(1.160 1) translate(-1426.600 0)">62</text>
<!-- watermark -->
<text x="629.500" y="448" font-family="'Liberation Serif',serif" font-weight="bold" font-style="italic" font-size="31" fill="#1a2a1a" opacity="0.070" textLength="184" lengthAdjust="spacingAndGlyphs">i3DOne.com</text>
<text x="628.500" y="447" font-family="'Liberation Serif',serif" font-weight="bold" font-style="italic" font-size="31" fill="#ffffff" opacity="0.120" textLength="184" lengthAdjust="spacingAndGlyphs">i3DOne.com</text>
</svg>

  <div id="title">家庭版 - [阿帕奇.Z1]</div>
</div>
</body>
</html>
